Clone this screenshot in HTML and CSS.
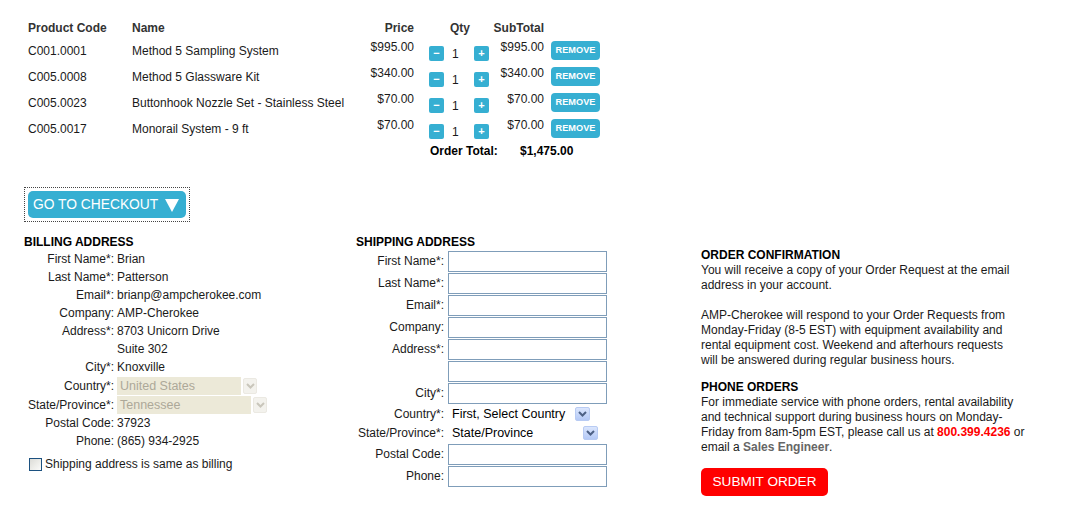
FILE: index.html
```html
<!DOCTYPE html>
<html>
<head>
<meta charset="utf-8">
<title>Cart</title>
<link rel="stylesheet" href="styles.css">
</head>
<body>
<div class="page">
  <div class="cart">
    <div class="cart-row cart-head">
      <div class="c-code">Product Code</div>
      <div class="c-name">Name</div>
      <div class="c-price">Price</div>
      <div class="c-qty">Qty</div>
      <div class="c-sub">SubTotal</div>
      <div class="c-act"></div>
    </div>
    <div class="cart-row item">
      <div class="c-code">C001.0001</div>
      <div class="c-name">Method 5 Sampling System</div>
      <div class="c-price">$995.00</div>
      <div class="c-qty"><span class="qbtn">&minus;</span><span class="qnum">1</span><span class="qbtn">+</span></div>
      <div class="c-sub">$995.00</div>
      <div class="c-act"><span class="remove">REMOVE</span></div>
    </div>
    <div class="cart-row item">
      <div class="c-code">C005.0008</div>
      <div class="c-name">Method 5 Glassware Kit</div>
      <div class="c-price">$340.00</div>
      <div class="c-qty"><span class="qbtn">&minus;</span><span class="qnum">1</span><span class="qbtn">+</span></div>
      <div class="c-sub">$340.00</div>
      <div class="c-act"><span class="remove">REMOVE</span></div>
    </div>
    <div class="cart-row item">
      <div class="c-code">C005.0023</div>
      <div class="c-name">Buttonhook Nozzle Set - Stainless Steel</div>
      <div class="c-price">$70.00</div>
      <div class="c-qty"><span class="qbtn">&minus;</span><span class="qnum">1</span><span class="qbtn">+</span></div>
      <div class="c-sub">$70.00</div>
      <div class="c-act"><span class="remove">REMOVE</span></div>
    </div>
    <div class="cart-row item">
      <div class="c-code">C005.0017</div>
      <div class="c-name">Monorail System - 9 ft</div>
      <div class="c-price">$70.00</div>
      <div class="c-qty"><span class="qbtn">&minus;</span><span class="qnum">1</span><span class="qbtn">+</span></div>
      <div class="c-sub">$70.00</div>
      <div class="c-act"><span class="remove">REMOVE</span></div>
    </div>
    <div class="cart-total"><span class="t-label">Order Total:</span><span class="t-value">$1,475.00</span></div>
  </div>

  <div class="checkout-wrap">
    <div class="checkout-btn">GO TO CHECKOUT
      <svg class="tri" width="14" height="14" viewBox="0 0 14 14"><polygon points="0,1 14,1 7,14" fill="#fff"/></svg>
    </div>
  </div>

  <div class="addresses">
    <div class="billing">
      <div class="sec-title">BILLING ADDRESS</div>
      <div class="brow"><span class="lbl">First Name*:</span><span class="val">Brian</span></div>
      <div class="brow"><span class="lbl">Last Name*:</span><span class="val">Patterson</span></div>
      <div class="brow"><span class="lbl">Email*:</span><span class="val">brianp@ampcherokee.com</span></div>
      <div class="brow"><span class="lbl">Company:</span><span class="val">AMP-Cherokee</span></div>
      <div class="brow"><span class="lbl">Address*:</span><span class="val">8703 Unicorn Drive</span></div>
      <div class="brow"><span class="lbl"></span><span class="val">Suite 302</span></div>
      <div class="brow"><span class="lbl">City*:</span><span class="val">Knoxville</span></div>
      <div class="brow sel"><span class="lbl">Country*:</span>
        <span class="dsel"><span class="dsel-box w-country">United States</span><span class="dsel-arrow"><svg width="9" height="6" viewBox="0 0 9 6"><path d="M1 1 L4.5 4.5 L8 1" fill="none" stroke="#c9c6bb" stroke-width="2"/></svg></span></span>
      </div>
      <div class="brow sel"><span class="lbl">State/Province*:</span>
        <span class="dsel"><span class="dsel-box w-state">Tennessee</span><span class="dsel-arrow"><svg width="9" height="6" viewBox="0 0 9 6"><path d="M1 1 L4.5 4.5 L8 1" fill="none" stroke="#c9c6bb" stroke-width="2"/></svg></span></span>
      </div>
      <div class="brow"><span class="lbl">Postal Code:</span><span class="val">37923</span></div>
      <div class="brow"><span class="lbl">Phone:</span><span class="val">(865) 934-2925</span></div>
      <label class="same"><span class="cbox"></span>Shipping address is same as billing</label>
    </div>

    <div class="shipping">
      <div class="sec-title">SHIPPING ADDRESS</div>
      <div class="srow"><span class="lbl">First Name*:</span><span class="inp"></span></div>
      <div class="srow"><span class="lbl">Last Name*:</span><span class="inp"></span></div>
      <div class="srow"><span class="lbl">Email*:</span><span class="inp"></span></div>
      <div class="srow"><span class="lbl">Company:</span><span class="inp"></span></div>
      <div class="srow"><span class="lbl">Address*:</span><span class="inp"></span></div>
      <div class="srow"><span class="lbl"></span><span class="inp"></span></div>
      <div class="srow"><span class="lbl">City*:</span><span class="inp"></span></div>
      <div class="srow sel"><span class="lbl">Country*:</span>
        <span class="ssel w-scountry">First, Select Country<span class="ssel-arrow"><svg width="9" height="6" viewBox="0 0 9 6"><path d="M1 1 L4.5 4.5 L8 1" fill="none" stroke="#4d6185" stroke-width="2"/></svg></span></span>
      </div>
      <div class="srow sel"><span class="lbl">State/Province*:</span>
        <span class="ssel w-sstate">State/Province<span class="ssel-arrow"><svg width="9" height="6" viewBox="0 0 9 6"><path d="M1 1 L4.5 4.5 L8 1" fill="none" stroke="#4d6185" stroke-width="2"/></svg></span></span>
      </div>
      <div class="srow"><span class="lbl">Postal Code:</span><span class="inp"></span></div>
      <div class="srow"><span class="lbl">Phone:</span><span class="inp"></span></div>
    </div>

    <div class="info">
      <div class="info-title">ORDER CONFIRMATION</div>
      <p>You will receive a copy of your Order Request at the email<br>address in your account.</p>
      <p>AMP-Cherokee will respond to your Order Requests from<br>Monday-Friday (8-5 EST) with equipment availability and<br>rental equipment cost. Weekend and afterhours requests<br>will be answered during regular business hours.</p>
      <div class="info-title phone">PHONE ORDERS</div>
      <p>For immediate service with phone orders, rental availability<br>and technical support during business hours on Monday-<br>Friday from 8am-5pm EST, please call us at <b class="tel">800.399.4236</b> or<br>email a <b class="eng">Sales Engineer</b>.</p>
      <div class="submit">SUBMIT ORDER</div>
    </div>
  </div>
</div>
</body>
</html>
```
FILE: styles.css
```css
body {
  margin: 0;
  background: #fff;
  font-family: "Liberation Sans", Arial, sans-serif;
  font-size: 12px;
  color: #1a1a1a;
}
.page {
  padding: 19px 0 0 24px;
}

/* cart */
.cart-row {
  display: grid;
  grid-template-columns: 104px 232px 54px 78px 52px 56px;
}
.cart-head {
  height: 19px;
  line-height: 19px;
  font-weight: bold;
  color: #333;
}
.c-code, .c-name { padding-left: 4px; white-space: nowrap; }
.c-price, .c-sub { text-align: right; white-space: nowrap; }
.cart-head .c-qty { padding-left: 36px; }
.item { height: 26px; }
.item .c-code, .item .c-name { line-height: 26px; }
.item .c-price, .item .c-sub { padding-top: 2px; line-height: 14px; }
.item .c-qty {
  display: flex;
  align-items: flex-start;
  padding: 8px 0 0 15px;
}
.qbtn {
  width: 15px;
  height: 15px;
  border-radius: 2px;
  background: #36afd2;
  color: #fff;
  font-size: 11px;
  font-weight: bold;
  line-height: 15px;
  text-align: center;
}
.qnum {
  width: 30px;
  padding: 1px 0 0 8px;
  box-sizing: border-box;
  line-height: 15px;
}
.c-act { padding-top: 3px; }
.remove {
  display: block;
  margin-left: 7px;
  width: 49px;
  height: 19px;
  border-radius: 4px;
  background: #36afd2;
  color: #fff;
  font-size: 9.2px;
  font-weight: bold;
  line-height: 19px;
  text-align: center;
}
.cart-total {
  height: 18px;
  line-height: 18px;
  padding-left: 406px;
  font-weight: bold;
  color: #000;
}
.t-label { display: inline-block; width: 90px; }

/* checkout */
.checkout-wrap {
  display: inline-block;
  margin-top: 27px;
  border: 1px dotted #444;
  padding: 3px;
}
.checkout-btn {
  display: flex;
  align-items: center;
  width: 158px;
  height: 27px;
  box-sizing: border-box;
  padding-left: 5px;
  border-radius: 5px;
  background: #36afd2;
  color: #fff;
  font-size: 13.8px;
  white-space: nowrap;
}
.tri { margin-left: 7px; margin-top: 1px; }

/* addresses */
.addresses {
  display: flex;
  margin-top: 13px;
}
.sec-title {
  font-weight: bold;
  color: #000;
  line-height: 14px;
  margin-bottom: 1px;
}
.billing { width: 332px; }
.brow {
  display: flex;
  height: 18px;
  line-height: 18px;
}
.brow.sel { height: 19px; align-items: center; }
.brow .lbl {
  width: 90px;
  text-align: right;
  margin-right: 3px;
  white-space: nowrap;
}
.dsel { display: flex; gap: 2px; align-items: center; }
.dsel-box {
  height: 18px;
  line-height: 18px;
  padding-left: 3px;
  box-sizing: border-box;
  background: #ece9d8;
  color: #aca899;
  font-size: 12.5px;
}
.w-country { width: 124px; }
.w-state { width: 134px; }
.dsel-arrow {
  display: flex;
  align-items: center;
  justify-content: center;
  width: 14px;
  height: 16px;
  border-radius: 2px;
  background: #f3f2ed;
  border: 1px solid #ebe9e2;
  box-sizing: border-box;
}
.same {
  display: flex;
  align-items: center;
  margin: 7px 0 0 5px;
  line-height: 14px;
}
.cbox {
  width: 13px;
  height: 13px;
  box-sizing: border-box;
  border: 1px solid #1c5180;
  background: linear-gradient(135deg, #dcdcd7, #fbfbf9);
  margin-right: 3px;
}

.shipping { width: 345px; }
.srow {
  display: flex;
  align-items: center;
  height: 22px;
}
.srow.sel { height: 19.5px; }
.srow .lbl {
  width: 88px;
  text-align: right;
  margin-right: 4px;
  white-space: nowrap;
}
.inp {
  width: 159px;
  height: 21px;
  box-sizing: border-box;
  border: 1px solid #7f9db9;
  background: #fff;
}
.ssel {
  display: flex;
  align-items: center;
  justify-content: space-between;
  box-sizing: border-box;
  padding-left: 4px;
  font-size: 12.5px;
  color: #000;
}
.w-scountry { width: 142px; }
.w-sstate { width: 150px; }
.ssel-arrow {
  display: flex;
  align-items: center;
  justify-content: center;
  width: 15px;
  height: 14px;
  box-sizing: border-box;
  border-radius: 2px;
  border: 1px solid #b8cbf3;
  background: linear-gradient(#dbe6fd, #b4c9f6);
}

.info {
  padding-top: 13px;
  line-height: 15px;
}
.info-title {
  font-weight: bold;
  color: #000;
}
.info p { margin: 0 0 15px; }
.info p + .info-title { margin-top: -3px; }
.info p:last-of-type { margin-bottom: 0; }
.tel { color: #ff0000; }
.eng { color: #666; }
.submit {
  width: 127px;
  height: 28px;
  margin-top: 13px;
  border-radius: 5px;
  background: #ff0000;
  color: #fff;
  font-size: 13.6px;
  line-height: 28px;
  text-align: center;
}
```
